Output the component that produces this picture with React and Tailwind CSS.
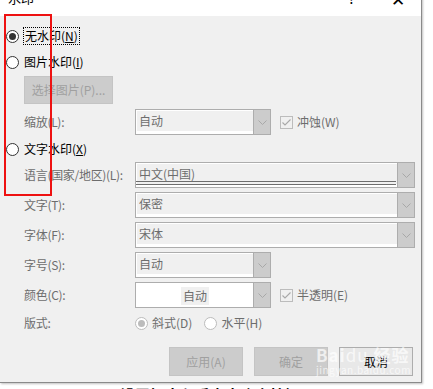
import React from 'react'

const font = { fontFamily: '"Microsoft YaHei UI", "Noto Sans CJK SC", "Noto Sans", sans-serif' }

function Chevron() {
  return (
    <svg width="9" height="5" viewBox="0 0 9 5" className="block">
      <path d="M0.5 0.5 L4.5 4.5 L8.5 0.5" fill="none" stroke="#a8a8a8" strokeWidth="1" />
    </svg>
  )
}

function Combo({ w, text, white, center, lang }) {
  return (
    <div className={`${w} h-[26px] flex border border-[#adadad] ${white ? 'bg-white' : 'bg-[#f0f0f0]'}`}>
      <div className={`flex-1 min-w-0 relative border-t border-l border-white ${white ? '' : 'border-b-[3px]'} flex items-center ${center ? 'justify-center' : 'pl-[2px]'}`}>
        <span className={`text-[12px] leading-none ${white ? 'text-[#6d6d6d] bg-[#f0f0f0] px-[2px] py-[3px]' : 'text-[#6d6d6d]'}`}>{text}</span>
        {lang && (
          <div className="absolute left-[-1px] right-[1px] bottom-[-1px] h-[4px] border-t border-b border-[#6d6d6d]" />
        )}
      </div>
      <div className="w-[17px] bg-[#cccccc] border-l border-[#adadad] flex items-center justify-center">
        <Chevron />
      </div>
    </div>
  )
}

function Radio({ checked, disabled }) {
  return (
    <div className={`w-[13px] h-[13px] rounded-full border ${disabled ? 'border-[#bcbcbc] bg-white' : 'border-[#333] bg-white'} flex items-center justify-center shrink-0`}>
      {checked && <div className={`w-[7px] h-[7px] rounded-full ${disabled ? 'bg-[#bcbcbc]' : 'bg-[#333]'}`} />}
    </div>
  )
}

function Check() {
  return (
    <div className="w-[13px] h-[13px] border border-[#bcbcbc] bg-[#f0f0f0] flex items-center justify-center shrink-0">
      <svg width="9" height="7" viewBox="0 0 9 7">
        <path d="M0.5 3.5 L3 6 L8.5 0.5" fill="none" stroke="#a8a8a8" strokeWidth="1.1" />
      </svg>
    </div>
  )
}

function Row({ label, children, className = '' }) {
  return (
    <div className={`flex items-center ${className}`}>
      <div className="w-[135px] shrink-0 pl-[24px] text-[12px] text-[#6d6d6d] whitespace-nowrap tracking-[-0.3px]">{label}</div>
      {children}
    </div>
  )
}

export default function App() {
  return (
    <div className="w-[433px] h-[389px] overflow-hidden bg-white relative" style={font}>
      <div className="w-[422px] border-r border-b border-[#8a8a8a] shadow-[1px_1px_2px_rgba(0,0,0,0.25)]">
        {/* title bar, top cut off */}
        <div className="h-[36px] -mt-[20px] bg-white flex items-center pl-[8px] pr-[16px]">
          <span className="text-[13px] text-black">水印</span>
          <span className="ml-auto text-[14px] text-black mr-[36px]">?</span>
          <span className="text-[17px] text-black leading-none">✕</span>
        </div>

        <div className="bg-[#f0f0f0] h-[366px] relative pt-[11px]">
          {/* red marker */}
          <div className="absolute left-[4px] top-[-2px] w-[48px] h-[182px] border-2 border-[#ee1111] pointer-events-none z-10" />

          <div className="flex items-center pl-[6px] h-[18px] gap-[4px]">
            <Radio checked />
            <span className="text-[12px] text-black border border-dotted border-black px-[1px] leading-[16px]">
              无水印(<span className="underline">N</span>)
            </span>
          </div>
          <div className="flex items-center pl-[6px] h-[18px] gap-[5px] mt-[8px]">
            <Radio />
            <span className="text-[12px] text-black">图片水印(<span className="underline">I</span>)</span>
          </div>
          <div className="ml-[24px] mt-[5px] w-[89px] h-[28px] bg-[#cccccc] border border-[#c4c4c4] flex items-center justify-center text-[12px] text-[#a0a0a0]">
            选择图片(P)...
          </div>

          <Row label="缩放(L):" className="mt-[5px]">
            <Combo w="w-[136px]" text="自动" />
            <div className="flex items-center gap-[4px] ml-[9px]">
              <Check />
              <span className="text-[12px] text-[#6d6d6d]">冲蚀(W)</span>
            </div>
          </Row>

          <div className="flex items-center pl-[6px] h-[18px] gap-[5px] mt-[5px]">
            <Radio />
            <span className="text-[12px] text-black">文字水印(<span className="underline">X</span>)</span>
          </div>

          <Row label="语言(国家/地区)(L):" className="mt-[4px]">
            <Combo w="w-[280px]" text="中文(中国)" lang />
          </Row>
          <Row label="文字(T):" className="mt-[4px]">
            <Combo w="w-[280px]" text="保密" />
          </Row>
          <Row label="字体(F):" className="mt-[4px]">
            <Combo w="w-[280px]" text="宋体" />
          </Row>
          <Row label="字号(S):" className="mt-[4px]">
            <Combo w="w-[136px]" text="自动" />
          </Row>
          <Row label="颜色(C):" className="mt-[4px]">
            <Combo w="w-[136px]" text="自动" white center />
            <div className="flex items-center gap-[4px] ml-[9px]">
              <Check />
              <span className="text-[12px] text-[#6d6d6d]">半透明(E)</span>
            </div>
          </Row>
          <Row label="版式:" className="mt-[6px] h-[18px]">
            <div className="flex items-center gap-[4px]">
              <Radio checked disabled />
              <span className="text-[12px] text-[#6d6d6d]">斜式(D)</span>
            </div>
            <div className="flex items-center gap-[4px] ml-[12px]">
              <Radio disabled />
              <span className="text-[12px] text-[#6d6d6d]">水平(H)</span>
            </div>
          </Row>

          <div className="flex justify-end gap-[11px] pr-[8px] mt-[15px]">
            <div className="w-[74px] h-[29px] bg-[#cccccc] border border-[#c4c4c4] flex items-center justify-center text-[12px] text-[#a0a0a0]">应用(A)</div>
            <div className="w-[74px] h-[29px] bg-[#cccccc] border border-[#c4c4c4] flex items-center justify-center text-[12px] text-[#a0a0a0]">确定</div>
            <div className="w-[74px] h-[29px] bg-[#e8e8e8] border border-[#adadad] flex items-center justify-center text-[12px] text-black">取消</div>
          </div>

          {/* baidu watermark */}
          <div className="absolute left-[316px] top-[330px] pointer-events-none text-white/70 leading-none">
            <div className="text-[17px] font-bold tracking-[1px]">Bai<span className="font-normal">du</span> 经验</div>
            <div className="text-[10px] mt-[2px] tracking-[0.5px]">jingyan.baidu.com</div>
          </div>
        </div>
      </div>

      {/* document text below dialog, mostly cut */}
      <div className="pl-[120px] mt-[4px] text-[15px] font-bold text-black leading-none whitespace-nowrap">
        设置好水印后点击确定按钮
      </div>
    </div>
  )
}
